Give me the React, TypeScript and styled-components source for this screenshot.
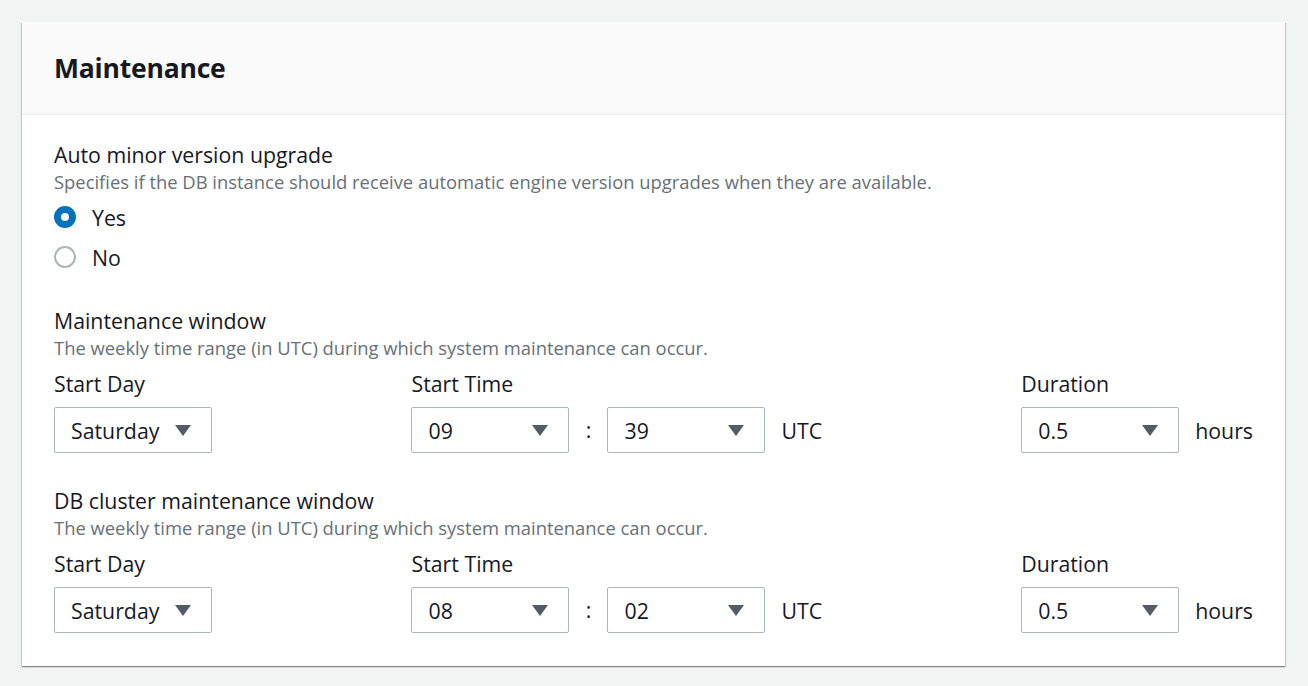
import React from "react";
import styled, { createGlobalStyle } from "styled-components";

const Global = createGlobalStyle`
  html, body { margin: 0; padding: 0; background: #f2f3f3; }
  body { font-family: "Open Sans", "Noto Sans", sans-serif; color: #16191f; }
  * { box-sizing: border-box; }
`;

const Page = styled.div`
  padding: 22px 23px 20px 22px;
`;

const Card = styled.section`
  background: #fff;
  box-shadow: 0 1px 1px 0 rgba(0, 28, 36, 0.3), 1px 1px 1px 0 rgba(0, 28, 36, 0.15),
    -1px 1px 1px 0 rgba(0, 28, 36, 0.15);
`;

const Header = styled.header`
  background: #fafafa;
  border-bottom: 1px solid #eaeded;
  height: 93px;
  padding: 0 32px;
  display: flex;
  align-items: center;
`;

const Title = styled.h2`
  margin: 0;
  font-size: 26.5px;
  font-weight: 700;
  line-height: 32px;
  letter-spacing: -0.2px;
`;

const Body = styled.div`
  padding: 28px 32px 33px;
  display: flex;
  flex-direction: column;
`;

const Field = styled.div<{ $gap?: number }>`
  margin-top: ${(p) => p.$gap ?? 0}px;
  display: flex;
  flex-direction: column;
`;

const Label = styled.div`
  font-size: 21.3px;
  line-height: 24px;
`;

const Desc = styled.div`
  margin-top: 4px;
  font-size: 18.4px;
  line-height: 22px;
  color: #687078;
`;

const RadioGroup = styled.div`
  margin-top: 4px;
  display: flex;
  flex-direction: column;
`;

const RadioRow = styled.label`
  height: 40px;
  display: flex;
  align-items: center;
  gap: 16px;
  font-size: 21.3px;
`;

const RadioDot = styled.span<{ $checked?: boolean }>`
  width: 22px;
  height: 22px;
  border-radius: 50%;
  flex: none;
  border: ${(p) => (p.$checked ? "7px solid #0073bb" : "2px solid #aab7b8")};
  background: #fff;
`;

const Row = styled.div`
  margin-top: 13px;
  display: flex;
  justify-content: space-between;
  align-items: flex-start;
`;

const Col = styled.div`
  display: flex;
  flex-direction: column;
  gap: 11px;
`;

const Controls = styled.div`
  display: flex;
  align-items: center;
`;

const SelectBox = styled.div<{ $w?: number }>`
  height: 46px;
  width: ${(p) => (p.$w ? `${p.$w}px` : "auto")};
  border: 1px solid #aab7b8;
  border-radius: 2px;
  padding: 0 20px 0 16px;
  display: flex;
  align-items: center;
  justify-content: space-between;
  gap: 16px;
  font-size: 21.3px;
  background: #fff;
`;

const Colon = styled.span`
  width: 38px;
  text-align: center;
  font-size: 21.3px;
  padding-bottom: 2px;
`;

const Unit = styled.span`
  margin-left: 16px;
  font-size: 21.3px;
`;

const Caret = () => (
  <svg width="16" height="11" viewBox="0 0 16 11">
    <path d="M0 0 H16 L8 11 Z" fill="#545b64" />
  </svg>
);

const Select = ({ value, w }: { value: string; w?: number }) => (
  <SelectBox $w={w}>
    <span>{value}</span>
    <Caret />
  </SelectBox>
);

const WindowRow = ({ h, m }: { h: string; m: string }) => (
  <Row>
    <Col>
      <Label>Start Day</Label>
      <Controls>
        <Select value="Saturday" />
      </Controls>
    </Col>
    <Col>
      <Label>Start Time</Label>
      <Controls>
        <Select value={h} w={158} />
        <Colon>:</Colon>
        <Select value={m} w={158} />
        <Unit>UTC</Unit>
      </Controls>
    </Col>
    <Col>
      <Label>Duration</Label>
      <Controls>
        <Select value="0.5" w={158} />
        <Unit>hours</Unit>
      </Controls>
    </Col>
  </Row>
);

export default function App() {
  return (
    <>
      <Global />
      <Page>
        <Card>
          <Header>
            <Title>Maintenance</Title>
          </Header>
          <Body>
            <Field>
              <Label>Auto minor version upgrade</Label>
              <Desc>
                Specifies if the DB instance should receive automatic engine version upgrades when they are
                available.
              </Desc>
              <RadioGroup>
                <RadioRow>
                  <RadioDot $checked />
                  Yes
                </RadioRow>
                <RadioRow>
                  <RadioDot />
                  No
                </RadioRow>
              </RadioGroup>
            </Field>
            <Field $gap={32}>
              <Label>Maintenance window</Label>
              <Desc>The weekly time range (in UTC) during which system maintenance can occur.</Desc>
              <WindowRow h="09" m="39" />
            </Field>
            <Field $gap={36}>
              <Label>DB cluster maintenance window</Label>
              <Desc>The weekly time range (in UTC) during which system maintenance can occur.</Desc>
              <WindowRow h="08" m="02" />
            </Field>
          </Body>
        </Card>
      </Page>
    </>
  );
}
